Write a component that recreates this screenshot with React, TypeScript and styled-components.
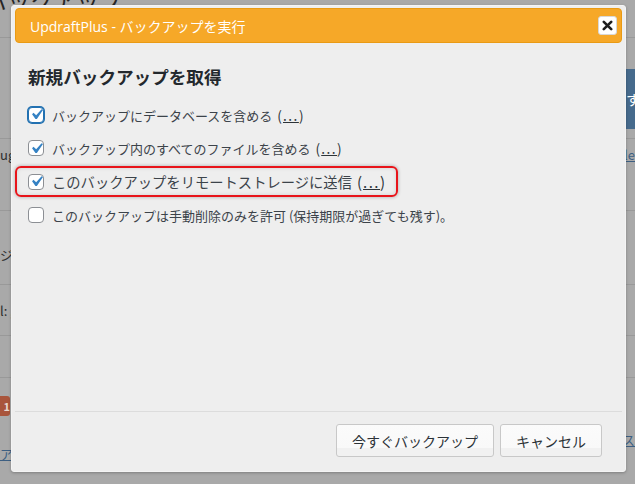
import { FunctionComponent } from "react";
import styled, { createGlobalStyle } from "styled-components";

const GlobalStyle = createGlobalStyle`
  html, body {
    margin: 0;
    padding: 0;
    background: #a9a9a9;
  }
  body {
    font-family: "Noto Sans CJK JP", "Noto Sans", sans-serif;
  }
`;

const Page = styled.div`
  position: relative;
  width: 635px;
  height: 484px;
  overflow: hidden;
  background: #a9a9a9;
`;

/* the dimmed wp-admin page behind the modal */
const Backdrop = styled.div`
  display: flex;
  flex-direction: column;
  width: 100%;
  color: #2e2e2e;
  font-size: 13px;
`;

const BackRow = styled.div<{ $h: number; $line?: boolean }>`
  height: ${(p) => p.$h}px;
  box-sizing: border-box;
  display: flex;
  justify-content: space-between;
  align-items: flex-start;
  border-bottom: ${(p) => (p.$line ? "1px solid #999" : "none")};
`;

const BackCell = styled.div<{ $top?: number }>`
  display: flex;
  flex-direction: column;
  align-items: flex-start;
  padding-top: ${(p) => p.$top ?? 0}px;
  gap: 6px;
`;

const PageTitle = styled.div`
  font-size: 23px;
  line-height: 1;
  margin: -11px 0 0 -16px;
  color: #262626;
`;

const BlueBlock = styled.div`
  width: 9px;
  height: 60px;
  margin-top: 31px;
  background: #466a8c;
  color: #fff;
  font-size: 14px;
  line-height: 60px;
  overflow: hidden;
`;

const BackLink = styled.span`
  color: #3d5f82;
  text-decoration: underline;
  font-size: 13px;
  line-height: 16px;
`;

const Badge = styled.span`
  display: inline-block;
  width: 10px;
  height: 20px;
  border-radius: 0 3px 3px 0;
  background: #a9553c;
  color: #e8d8d0;
  font-size: 11px;
  font-weight: bold;
  line-height: 20px;
  text-align: right;
`;

/* modal */
const Dialog = styled.div`
  position: absolute;
  left: 11px;
  top: 5px;
  width: 615px;
  height: 467px;
  box-sizing: border-box;
  padding: 2px 3px 3px;
  display: flex;
  flex-direction: column;
  background: #eeeeee;
  border: 1px solid #f4f4f4;
  border-radius: 3px;
  box-shadow: 0 1px 3px rgba(0, 0, 0, 0.25);
`;

const TitleBar = styled.div`
  height: 35px;
  box-sizing: border-box;
  display: flex;
  align-items: center;
  justify-content: space-between;
  padding: 0 4px 0 14px;
  background: #f6a828;
  border: 1px solid #e99a14;
  border-radius: 4px;
  color: #fff;
  font-family: "Open Sans", "Noto Sans CJK JP", sans-serif;
  font-size: 14px;
`;

const CloseButton = styled.button`
  width: 19px;
  height: 19px;
  padding: 0;
  display: flex;
  align-items: center;
  justify-content: center;
  background: #fff;
  border: 1px solid #d8d8d8;
  border-radius: 3px;
  cursor: pointer;
`;

const Body = styled.div`
  flex: 1;
  display: flex;
  flex-direction: column;
  align-items: flex-start;
  padding: 21px 0 0 13px;
  color: #3c434a;
`;

const Heading = styled.h2`
  margin: 0 0 8px;
  font-size: 17.6px;
  line-height: 26px;
  font-weight: bold;
  color: #23282d;
`;

const Option = styled.label<{ $highlight?: boolean }>`
  display: flex;
  align-items: center;
  gap: 8px;
  box-sizing: border-box;
  font-size: ${(p) => (p.$highlight ? "14.3px" : "13px")};
  cursor: pointer;
  height: ${(p) => (p.$highlight ? "31px" : "33.5px")};
  ${(p) =>
    p.$highlight &&
    `
    margin: 1.25px 0 1.25px -13px;
    padding: 0 11px 0 11px;
    border: 2px solid #e8141a;
    border-radius: 6px;
    box-shadow: 0 0 3px 1px rgba(0, 0, 0, 0.18), inset 0 0 4px rgba(0, 0, 0, 0.12);
  `}
`;

const Box = styled.span<{ $focus?: boolean }>`
  width: 16px;
  height: 16px;
  box-sizing: border-box;
  flex: 0 0 16px;
  display: flex;
  align-items: center;
  justify-content: center;
  background: #fff;
  border: 1px solid ${(p) => (p.$focus ? "#2271b1" : "#8c8f94")};
  border-radius: 4px;
  box-shadow: ${(p) => (p.$focus ? "0 0 0 1px #2271b1" : "none")};
`;

const More = styled.span`
  margin-left: 5px;
  color: #2c3338;
  font-size: 1.05em;
`;

const Dots = styled.span`
  text-decoration: underline;
  letter-spacing: 1.5px;
  padding-left: 1px;
`;

const Footer = styled.div`
  height: 57px;
  box-sizing: border-box;
  display: flex;
  justify-content: flex-end;
  align-items: flex-start;
  gap: 6px;
  padding: 12px 20px 0 0;
  border-top: 1px solid #dcdcdc;
`;

const Button = styled.button`
  height: 33px;
  padding: 0 15px;
  background: linear-gradient(#fbfbfb 0, #f9f9f9 74%, #f1f1f1 74%, #f1f1f1 100%);
  border: 1px solid #c8c8c8;
  border-radius: 3px;
  color: #2c3338;
  font-family: "Noto Sans CJK JP", sans-serif;
  font-size: 14px;
  cursor: pointer;
`;

const Check: FunctionComponent = () => (
  <svg width="21" height="21" viewBox="0 0 20 20" style={{ margin: "-3px -4px" }}>
    <path
      d="M14.83 4.89l1.34.94-5.81 8.38H9.02L5.78 9.67l1.34-1.25 2.57 2.4z"
      fill="#3582c4"
    />
  </svg>
);

const options = [
  { text: "バックアップにデータベースを含める", more: true, checked: true, focus: true },
  { text: "バックアップ内のすべてのファイルを含める", more: true, checked: true },
  { text: "このバックアップをリモートストレージに送信", more: true, checked: true, highlight: true },
  { text: "このバックアップは手動削除のみを許可 (保持期限が過ぎても残す)。", more: false, checked: false },
];

const App: FunctionComponent = () => {
  return (
    <>
      <GlobalStyle />
      <Page>
        <Backdrop>
          <BackRow $h={38} $line>
            <PageTitle>バックアップ</PageTitle>
          </BackRow>
          <BackRow $h={101} $line>
            <span />
            <BlueBlock>す</BlueBlock>
          </BackRow>
          <BackRow $h={72} $line>
            <BackCell $top={6}>ug</BackCell>
            <BackCell $top={8}>
              <BackLink>le</BackLink>
            </BackCell>
          </BackRow>
          <BackRow $h={74} $line>
            <BackCell $top={34}>ジ</BackCell>
          </BackRow>
          <BackRow $h={51} $line>
            <BackCell $top={16}>l: ,</BackCell>
          </BackRow>
          <BackRow $h={42} $line />
          <BackRow $h={106}>
            <BackCell $top={18}>
              <Badge>1</Badge>
              <span style={{ height: 18 }} />
              <BackLink>ア</BackLink>
            </BackCell>
            <BackCell $top={54}>
              <BackLink>ス</BackLink>
            </BackCell>
          </BackRow>
        </Backdrop>

        <Dialog>
          <TitleBar>
            <span>UpdraftPlus - バックアップを実行</span>
            <CloseButton aria-label="閉じる">
              <svg width="11" height="11" viewBox="0 0 11 11">
                <path
                  d="M1.8 1.8L9.2 9.2M9.2 1.8L1.8 9.2"
                  stroke="#1d1d1d"
                  strokeWidth="2.6"
                  strokeLinecap="round"
                />
              </svg>
            </CloseButton>
          </TitleBar>
          <Body>
            <Heading>新規バックアップを取得</Heading>
            {options.map((o) => (
              <Option key={o.text} $highlight={o.highlight}>
                <Box $focus={o.focus}>{o.checked && <Check />}</Box>
                <span>
                  {o.text}
                  {o.more && (
                    <More>
                      (<Dots>...</Dots>)
                    </More>
                  )}
                </span>
              </Option>
            ))}
          </Body>
          <Footer>
            <Button>今すぐバックアップ</Button>
            <Button>キャンセル</Button>
          </Footer>
        </Dialog>
      </Page>
    </>
  );
};

export default App;
